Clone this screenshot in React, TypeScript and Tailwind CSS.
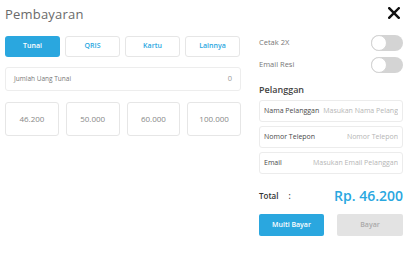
import { useState } from "react";

const tabs = ["Tunai", "QRIS", "Kartu", "Lainnya"];
const amounts = ["46.200", "50.000", "60.000", "100.000"];

function Toggle() {
  return (
    <div className="relative h-[16px] w-[32px] rounded-full bg-[#d4d4d4]">
      <div className="absolute left-0 top-0 h-[16px] w-[16px] rounded-full border border-[#d4d4d4] bg-white" />
    </div>
  );
}

function Field({ label, placeholder }: { label: string; placeholder: string }) {
  return (
    <div className="flex h-[22px] items-center gap-[4px] overflow-hidden whitespace-nowrap rounded-[3px] border border-[#ececec] px-[4px] text-[7px]">
      <span className="shrink-0 font-medium text-[#4a4a4a]">{label}</span>
      <span className="ml-auto overflow-hidden text-right text-[#b5b5b5]">{placeholder}</span>
    </div>
  );
}

export default function App() {
  const [active, setActive] = useState("Tunai");

  return (
    <div className="flex h-[266px] w-[413px] bg-white font-['Open_Sans',sans-serif]">
      {/* left: metode bayar */}
      <div className="flex w-[241px] flex-col pl-[5px] pt-[4px]">
        <h1 className="text-[13px] leading-[20px] tracking-[0.2px] text-[#6a6a6a]">Pembayaran</h1>

        <div className="mt-[12px] flex gap-[5px]">
          {tabs.map((t) => (
            <button
              key={t}
              onClick={() => setActive(t)}
              className={
                active === t
                  ? "h-[21px] w-[55px] rounded-[3px] bg-[#2aa7df] text-[7px] font-semibold text-white"
                  : "h-[21px] w-[55px] rounded-[3px] border border-[#e6e6e6] bg-white text-[7px] font-semibold text-[#2aa7df]"
              }
            >
              {t}
            </button>
          ))}
        </div>

        <div className="mt-[10px] flex h-[24px] items-center justify-between rounded-[3px] border border-[#ededed] px-[8px] text-[6.5px] text-[#777]">
          <span>Jumlah Uang Tunai</span>
          <span className="text-[7.5px] text-[#999]">0</span>
        </div>

        <div className="mt-[11px] grid grid-cols-4 gap-[7px]">
          {amounts.map((a) => (
            <button
              key={a}
              className="h-[34px] rounded-[3px] border border-[#e6e6e6] bg-white text-[8px] text-[#888]"
            >
              {a}
            </button>
          ))}
        </div>
      </div>

      {/* right: opsi & pelanggan */}
      <div className="ml-[18px] flex w-[144px] flex-col">
        <div className="flex justify-end pt-[7px] pr-[3px]">
          <svg width="12" height="12" viewBox="0 0 12 12">
            <path d="M1.2 1.2 L10.8 10.8 M10.8 1.2 L1.2 10.8" stroke="#111" strokeWidth="2.4" strokeLinecap="square" />
          </svg>
        </div>

        <div className="mt-[16px] flex items-center justify-between">
          <span className="text-[7.5px] text-[#777]">Cetak 2X</span>
          <Toggle />
        </div>
        <div className="mt-[6px] flex items-center justify-between">
          <span className="text-[7.5px] text-[#777]">Email Resi</span>
          <Toggle />
        </div>

        <div className="mt-[11px] text-[9px] font-semibold leading-[12px] text-[#444]">Pelanggan</div>

        <div className="mt-[4px] flex flex-col gap-[4px]">
          <Field label="Nama Pelanggan" placeholder="Masukan Nama Pelanggan" />
          <Field label="Nomor Telepon" placeholder="Nomor Telepon" />
          <Field label="Email" placeholder="Masukan Email Pelanggan" />
        </div>

        <div className="mt-[14px] flex items-center justify-between">
          <span className="text-[8px] font-semibold text-[#333]">
            Total<span className="ml-[10px]">:</span>
          </span>
          <span className="text-[14px] font-semibold leading-[16px] text-[#2aa7df]">Rp. 46.200</span>
        </div>

        <div className="mt-[10px] flex justify-between">
          <button className="h-[22px] w-[65px] rounded-[2px] bg-[#2aa7df] text-[7px] font-semibold text-white">
            Multi Bayar
          </button>
          <button className="h-[22px] w-[66px] rounded-[2px] bg-[#e3e3e3] text-[7px] font-semibold text-[#aaa]">
            Bayar
          </button>
        </div>
      </div>
    </div>
  );
}
